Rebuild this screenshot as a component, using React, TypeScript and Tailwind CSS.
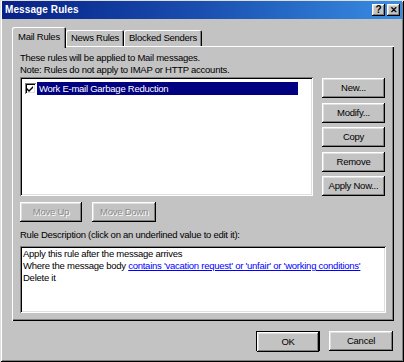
import React from 'react';

const raised =
  'shadow-[inset_-1px_-1px_0_#000,inset_1px_1px_0_#fff,inset_-2px_-2px_0_#808080,inset_2px_2px_0_#dfdfdf]';
const sunken =
  'shadow-[inset_1px_1px_0_#808080,inset_-1px_-1px_0_#fff,inset_2px_2px_0_#000,inset_-2px_-2px_0_#dfdfdf]';
const tabEdge = 'shadow-[inset_1px_1px_0_#fff,inset_-1px_0_0_#000,inset_-2px_0_0_#808080]';

const sideButtons = [
  { label: 'New...', mt: 'mt-0' },
  { label: 'Modify...', mt: 'mt-[5px]' },
  { label: 'Copy', mt: 'mt-[4px]' },
  { label: 'Remove', mt: 'mt-[5px]' },
  { label: 'Apply Now...', mt: 'mt-[4px]' },
];

const Btn: React.FC<{ label: string; className?: string; disabled?: boolean }> = ({ label, className = '', disabled }) => (
  <div
    className={`flex items-center justify-center h-[20px] bg-[#c3c3c3] whitespace-nowrap ${raised} ${
      disabled ? 'text-[#8a8a8a] [text-shadow:1px_1px_0_#fff]' : 'text-black'
    } ${className}`}
  >
    {label}
  </div>
);

const App: React.FC = () => {
  return (
    <div
      className="w-[404px] h-[362px] bg-[#c3c3c3] text-[9.5px] leading-[12px] tracking-[-0.25px] text-black overflow-hidden flex flex-col px-[2px] pt-[1px] shadow-[inset_1px_1px_0_#dfdfdf,inset_-1px_-1px_0_#000,inset_2px_2px_0_#fff,inset_-2px_-2px_0_#808080]"
      style={{ fontFamily: '"Liberation Sans", Arial, sans-serif' }}
    >
      {/* Title bar */}
      <div className="h-[18px] flex items-center justify-between bg-gradient-to-r from-[#0a1f86] via-[#1a4fb0] to-[#3a8de2] pl-[3px] pr-[2px]">
        <span className="text-white font-bold text-[10px] tracking-[0.1px]">Message Rules</span>
        <div className="flex gap-[2px]">
          <div className={`w-[13px] h-[12px] flex items-center justify-center bg-[#c3c3c3] ${raised} font-bold text-[10px] leading-none`}>?</div>
          <div className={`w-[13px] h-[12px] flex items-center justify-center bg-[#c3c3c3] ${raised} font-bold text-[9px] leading-none`}>✕</div>
        </div>
      </div>

      {/* Tabs */}
      <div className="flex items-end h-[19px] mt-[8px] pl-[10px]">
        <div className={`relative z-10 w-[54px] h-[21px] -mb-[2px] bg-[#c3c3c3] rounded-t-[2px] flex items-start justify-center pt-[4px] ${tabEdge}`}>
          Mail Rules
        </div>
        <div className={`w-[58px] h-[16px] bg-[#c3c3c3] rounded-t-[2px] flex items-center justify-center ${tabEdge}`}>
          News Rules
        </div>
        <div className={`w-[78px] h-[16px] bg-[#c3c3c3] rounded-t-[2px] flex items-center justify-center ${tabEdge}`}>
          Blocked Senders
        </div>
      </div>

      {/* Panel */}
      <div className="ml-[10px] w-[382px] h-[275px] flex flex-col px-[8px] pt-[6px] shadow-[inset_1px_1px_0_#fff,inset_-1px_-1px_0_#000,inset_-2px_-2px_0_#808080]">
        <div>These rules will be applied to Mail messages.</div>
        <div>Note: Rules do not apply to IMAP or HTTP accounts.</div>

        <div className="flex mt-[1px] gap-[9px]">
          <div className={`w-[293px] h-[119px] bg-white ${sunken} pt-[5px] pl-[5px]`}>
            <div className="flex items-center h-[13px]">
              <div className="w-[11px] h-[11px] bg-white shadow-[inset_1px_1px_0_#808080,inset_-1px_-1px_0_#fff,inset_2px_2px_0_#000,inset_-2px_-2px_0_#dfdfdf] flex items-center justify-center">
                <svg width="7" height="7" viewBox="0 0 7 7">
                  <path d="M0 3 L2 5 L6 1 L6 3 L2 7 L0 5 Z" fill="#000" />
                </svg>
              </div>
              <div className="ml-[1px] w-[261px] h-[13px] bg-[#000080] text-white flex items-center pl-[2px]">
                Work E-mail Garbage Reduction
              </div>
            </div>
          </div>
          <div className="flex flex-col w-[63px] pt-[1px]">
            {sideButtons.map((b) => (
              <Btn key={b.label} label={b.label} className={b.mt} />
            ))}
          </div>
        </div>

        <div className="flex gap-[10px] mt-[6px]">
          <Btn label="Move Up" disabled className="w-[62px]" />
          <Btn label="Move Down" disabled className="w-[64px]" />
        </div>

        <div className="mt-[7px]">Rule Description (click on an underlined value to edit it):</div>

        <div className={`mt-[5px] w-[366px] h-[67px] bg-white ${sunken} pt-[2px] pl-[3px]`}>
          <div>Apply this rule after the message arrives</div>
          <div className="whitespace-nowrap">
            Where the message body{' '}
            <span className="text-[#0000ff] underline">
              contains 'vacation request' or 'unfair' or 'working conditions'
            </span>
          </div>
          <div>Delete it</div>
        </div>
      </div>

      {/* Footer buttons */}
      <div className="flex justify-end gap-[9px] mt-[10px] pr-[9px]">
        <div className="w-[64px] h-[20px] bg-black p-[1px]">
          <Btn label="OK" className="h-[18px]" />
        </div>
        <Btn label="Cancel" className="w-[64px]" />
      </div>
    </div>
  );
};

export default App;
